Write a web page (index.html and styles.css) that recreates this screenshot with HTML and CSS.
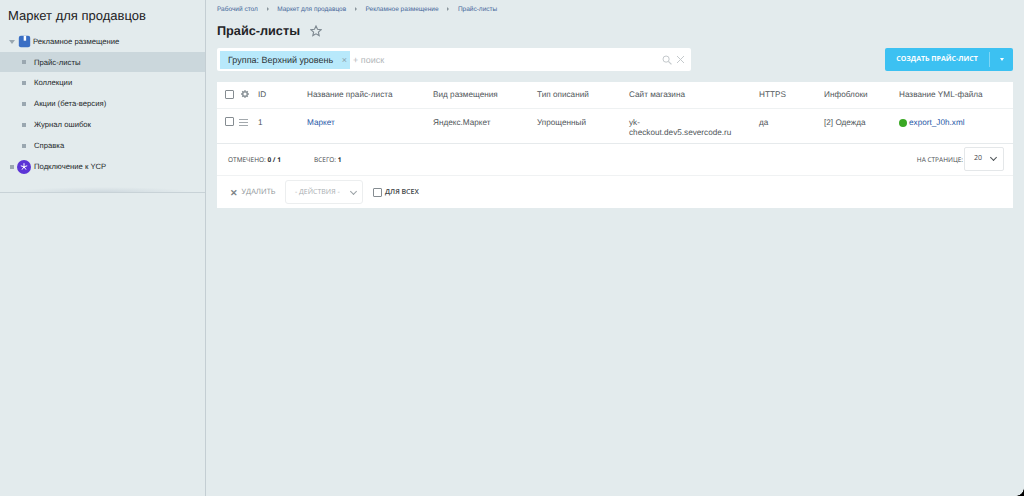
FILE: index.html
```html
<!DOCTYPE html>
<html lang="ru">
<head>
  <meta charset="UTF-8">
  <title>Прайс-листы</title>
  <link rel="stylesheet" href="styles.css">
</head>
<body>
<div class="page">

  <!-- левое меню -->
  <aside class="sidebar">
    <div class="side-top">
      <div class="side-title">Маркет для продавцов</div>
      <div class="menu-row top-row">
        <span class="tri-down"></span>
        <svg class="menu-icon" width="13" height="13" viewBox="0 0 16 16">
          <rect x="1" y="1" width="14" height="14" rx="2.5" fill="#3a6fc4"/>
          <rect x="7" y="1" width="3" height="6" fill="#fff"/>
        </svg>
        <span>Рекламное размещение</span>
      </div>
      <div class="menu-row sub-row active"><i class="dot"></i><span>Прайс-листы</span></div>
      <div class="menu-row sub-row"><i class="dot"></i><span>Коллекции</span></div>
      <div class="menu-row sub-row"><i class="dot"></i><span>Акции (бета-версия)</span></div>
      <div class="menu-row sub-row"><i class="dot"></i><span>Журнал ошибок</span></div>
      <div class="menu-row sub-row"><i class="dot"></i><span>Справка</span></div>
      <div class="menu-row top-row">
        <i class="dot small-left"></i>
        <svg class="menu-icon round" width="14" height="14" viewBox="0 0 14 14">
          <circle cx="7" cy="7" r="7" fill="#5b34d6"/>
          <path d="M7 3.2v3.6M7 6.8l3.2-1M7 6.8l-3.2-1M7 6.8l2 2.8M7 6.8l-2 2.8" stroke="#fff" stroke-width="1"/>
        </svg>
        <span>Подключение к YCP</span>
      </div>
    </div>
  </aside>

  <main class="content">
    <div class="crumbs">
      <a>Рабочий стол</a><i class="crumb-arrow"></i>
      <a>Маркет для продавцов</a><i class="crumb-arrow"></i>
      <a>Рекламное размещение</a><i class="crumb-arrow"></i>
      <a>Прайс-листы</a>
    </div>

    <div class="title-row">
      <h1>Прайс-листы</h1>
      <svg class="star" width="12" height="12" viewBox="0 0 12 12">
        <path d="M6 1l1.5 3.3 3.6.4-2.7 2.4.8 3.5L6 8.8l-3.2 1.8.8-3.5L.9 4.7l3.6-.4z" fill="none" stroke="#7d8890" stroke-width="1.1"/>
      </svg>
    </div>

    <div class="toolbar">
      <div class="search">
        <span class="tag">Группа: Верхний уровень<b class="tag-x">×</b></span>
        <span class="search-hint">+ поиск</span>
        <svg class="search-icon" width="10" height="10" viewBox="0 0 11 11">
          <circle cx="4.5" cy="4.5" r="3.4" fill="none" stroke="#c4c9cc" stroke-width="1.1"/>
          <path d="M7 7l3.4 3.4" stroke="#c4c9cc" stroke-width="1.3"/>
        </svg>
        <svg class="clear-icon" width="9" height="9" viewBox="0 0 9 9">
          <path d="M1 1l7 7M8 1L1 8" stroke="#c4c9cc" stroke-width="1"/>
        </svg>
      </div>
      <div class="create-btn">
        <span class="create-text">Создать прайс-лист</span>
        <span class="create-arrow"><i class="tri-white"></i></span>
      </div>
    </div>

    <div class="card">
      <div class="grid head-row">
        <div class="cell-tools">
          <i class="check"></i>
          <svg width="8" height="8" viewBox="0 0 10 10">
            <circle cx="5" cy="5" r="2.9" fill="none" stroke="#8f979c" stroke-width="2"/>
            <path d="M5 0v2M5 8v2M0 5h2M8 5h2M1.5 1.5l1.4 1.4M7.1 7.1l1.4 1.4M8.5 1.5L7.1 2.9M2.9 7.1L1.5 8.5" stroke="#8f979c" stroke-width="1.6"/>
          </svg>
        </div>
        <div>ID</div>
        <div>Название прайс-листа</div>
        <div>Вид размещения</div>
        <div>Тип описаний</div>
        <div>Сайт магазина</div>
        <div>HTTPS</div>
        <div>Инфоблоки</div>
        <div>Название YML-файла</div>
      </div>
      <div class="grid body-row">
        <div class="cell-tools">
          <i class="check"></i>
          <span class="burger"><i></i><i></i><i></i></span>
        </div>
        <div>1</div>
        <div><a class="link">Маркет</a></div>
        <div>Яндекс.Маркет</div>
        <div>Упрощенный</div>
        <div>yk-<br>checkout.dev5.severcode.ru</div>
        <div>да</div>
        <div>[2] Одежда</div>
        <div class="file-cell"><i class="green-dot"></i><a class="link">export_J0h.xml</a></div>
      </div>
      <div class="stat-row">
        <span class="stat stat-first">Отмечено: <b>0 / 1</b></span>
        <span class="stat">Всего: <b>1</b></span>
        <span class="stat stat-page">На странице:</span>
        <div class="page-select"><span>20</span><i class="chev"></i></div>
      </div>
      <div class="action-row">
        <span class="delete"><b class="del-x">✕</b>Удалить</span>
        <div class="actions-select"><span>- действия -</span><i class="chev light"></i></div>
        <label class="for-all"><i class="check small"></i>Для всех</label>
      </div>
    </div>
  </main>
</div>
<div class="corner"></div>
</body>
</html>
```

FILE: styles.css
```css
html, body { margin: 0; padding: 0; height: 100%; overflow: hidden; }
body {
  font-family: "Liberation Sans", "Noto Sans CJK KR", sans-serif;
  font-size: 8px;
  color: #3f4549;
  background-color: #e3ebed;
  text-rendering: geometricPrecision;
}
.page { display: flex; height: 496px; }

/* sidebar */
.sidebar {
  width: 205px;
  flex-shrink: 0;
  border-right: 1px solid #c4ced3;
}
.side-top {
  height: 193px;
  padding-top: 8px;
  box-sizing: border-box;
  border-bottom: 1px solid #c8d2d7;
  background: radial-gradient(ellipse 90px 5px at 50% 100%, #cfd9df, transparent);
}
.side-title { font-size: 13px; line-height: 16px; color: #1c2022; padding-left: 8px; margin-bottom: 7px; }
.menu-row {
  display: flex;
  align-items: center;
  height: 21px;
  color: #23282b;
  font-size: 7.7px;
  padding-left: 33px;
}
.top-row { padding-left: 9px; }
.sub-row .dot { margin-left: -11px; margin-right: 8px; }
.active { background-color: #cbd7dc; height: 20px; }
.dot { width: 4px; height: 4px; background-color: #9aa7b0; display: inline-block; flex-shrink: 0; }
.small-left { margin-right: 3px; margin-left: 1px; }
.tri-down {
  width: 0; height: 0;
  border-left: 3px solid transparent;
  border-right: 3px solid transparent;
  border-top: 4px solid #9aa7b0;
  margin-right: 3px;
}
.menu-icon { margin-right: 2px; flex-shrink: 0; }
.menu-icon.round { margin-right: 3px; }

/* content */
.content { flex: 1; padding: 0 11px; min-width: 0; }
.crumbs {
  display: flex;
  align-items: center;
  height: 18px;
  font-size: 6.5px;
  color: #46679a;
}
.crumb-arrow {
  width: 0; height: 0;
  border-top: 2px solid transparent;
  border-bottom: 2px solid transparent;
  border-left: 2.5px solid #8a959c;
  margin: 0 8.7px;
}
.title-row { display: flex; align-items: center; height: 25px; margin-bottom: 5px; }
h1 { font-size: 12.7px; font-weight: 700; margin: 0; color: #1f2427; }
.star { margin-left: 10px; }

.toolbar { display: flex; justify-content: space-between; height: 23px; margin-bottom: 11px; }
.search {
  width: 474px;
  background: #fff;
  border-radius: 2px;
  display: flex;
  align-items: center;
  padding: 0 3px;
  box-sizing: border-box;
}
.tag {
  height: 18px;
  line-height: 18px;
  background-color: #b8e9fb;
  padding-left: 8px;
  width: 130px;
  box-sizing: border-box;
  font-size: 9px;
  color: #2c3235;
  white-space: nowrap;
  position: relative;
}
.tag-x { position: absolute; right: 3px; top: 0; font-weight: 400; color: #8ea3ab; font-size: 9px; }
.search-hint { margin-left: 3px; color: #b3b7ba; font-size: 9px; }
.search-icon { margin-left: auto; }
.clear-icon { margin-left: 4px; margin-right: 3px; }
.create-btn {
  width: 128px;
  background-color: #3cc1f2;
  border-radius: 2px;
  display: flex;
  align-items: center;
  color: #fff;
}
.create-text {
  width: 105px;
  text-align: center;
  text-transform: uppercase;
  font-family: "Open Sans", "Liberation Sans", sans-serif;
  font-size: 7px;
  font-weight: 700;
  border-right: 1px solid #7ed6f6;
  line-height: 15px;
  box-sizing: border-box;
}
.create-arrow { flex: 1; display: flex; justify-content: center; }
.tri-white {
  width: 0; height: 0;
  border-left: 2.5px solid transparent;
  border-right: 2.5px solid transparent;
  border-top: 3px solid #fff;
}

/* таблица */
.card { background: #fff; width: 796px; }
.grid {
  display: grid;
  grid-template-columns: 41px 49px 126px 104px 92px 130px 65px 75px 1fr;
  font-size: 8.2px;
  color: #50565a;
}
.grid > div:first-child { padding-left: 8px; }
.head-row { height: 27px; align-items: center; border-bottom: 1px solid #eef1f2; box-sizing: border-box; padding-bottom: 2px; }
.body-row { height: 35px; padding-top: 9px; box-sizing: border-box; line-height: 10px; border-bottom: 1px solid #e6eaec; }
.cell-tools { display: flex; align-items: center; gap: 7px; }
.body-row .cell-tools { align-items: flex-start; gap: 5px; margin-top: -1px; }
.check {
  width: 7px; height: 7px;
  border: 1px solid #858c91;
  border-radius: 1px;
  display: inline-block;
  flex-shrink: 0;
}
.check.small { margin-right: 3px; }
.burger { display: flex; flex-direction: column; gap: 2px; width: 9px; padding-top: 2px; }
.burger i { height: 1px; background: #a3a9ad; display: block; }
.link { color: #2a5aa8; }
.file-cell { display: flex; align-items: flex-start; }
.green-dot {
  width: 8px; height: 8px;
  border-radius: 50%;
  background-color: #3aa824;
  margin-right: 2px;
  margin-top: 1px;
  flex-shrink: 0;
}
.stat-row {
  display: flex;
  align-items: center;
  height: 31px;
  padding: 0 9px 0 11px;
  border-bottom: 1px solid #f0f2f3;
  font-family: "Open Sans", "Liberation Sans", sans-serif;
}
.stat { font-size: 6.5px; text-transform: uppercase; color: #45494c; }
.stat b { color: #2b2f31; }
.stat-first { width: 86px; }
.stat-page { margin-left: auto; margin-right: 1px; }
.page-select {
  width: 40px;
  height: 24px;
  margin-top: -2px;
  box-sizing: border-box;
  border: 1px solid #e4e7e9;
  border-radius: 2px;
  display: flex;
  align-items: center;
  justify-content: space-between;
  padding: 0 7px 0 9px;
  font-size: 7px;
}
.chev {
  width: 4px; height: 4px;
  border-right: 1.2px solid #4c5256;
  border-bottom: 1.2px solid #4c5256;
  transform: rotate(45deg);
  margin-top: -2px;
}
.chev.light { border-color: #9aa1a5; }
.action-row {
  display: flex;
  align-items: center;
  height: 32px;
  padding-left: 13px;
  font-family: "Open Sans", "Liberation Sans", sans-serif;
}
.delete { font-size: 7.4px; text-transform: uppercase; color: #8b9195; width: 55px; display: flex; align-items: center; }
.del-x { font-size: 9px; color: #7d8387; margin-right: 4px; }
.actions-select {
  width: 78px;
  height: 24px;
  box-sizing: border-box;
  border: 1px solid #eceeef;
  border-radius: 3px;
  display: flex;
  align-items: center;
  justify-content: space-between;
  padding: 0 6px 0 9px;
  font-size: 7px;
  color: #a8adb0;
  text-transform: uppercase;
}
.for-all { display: flex; align-items: center; margin-left: 10px; font-size: 7px; font-weight: 600; text-transform: uppercase; color: #3f4549; }

.corner {
  position: absolute;
  right: 0;
  bottom: 0;
  width: 8px;
  height: 8px;
  background: radial-gradient(circle at 0 0, transparent 7.5px, #000 8px);
}
```
